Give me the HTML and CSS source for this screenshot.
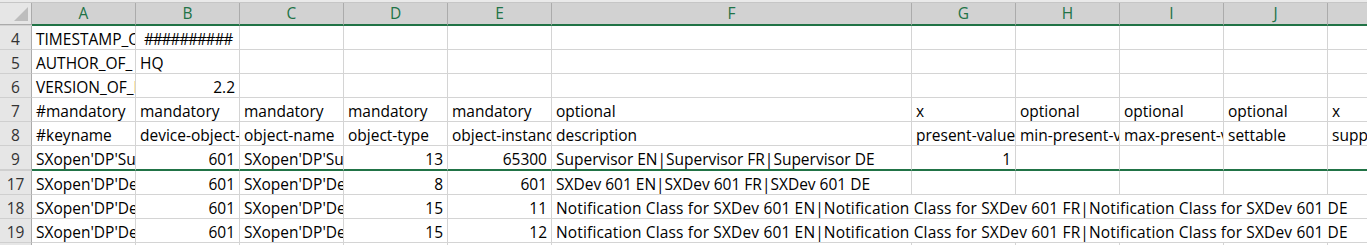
FILE: index.html
```html
<!DOCTYPE html>
<html lang="en">
<head>
    <meta charset="UTF-8">
    <title>Sheet</title>
    <link rel="stylesheet" href="styles.css">
</head>
<body>
    <div class="sheet">
        <div class="row head-row">
            <div class="corner">
                <svg width="14" height="14" viewBox="0 0 14 14"><polygon points="14,0 14,14 0,14" fill="#bdbdbd"/></svg>
            </div>
            <div class="ch">A</div>
            <div class="ch">B</div>
            <div class="ch">C</div>
            <div class="ch">D</div>
            <div class="ch">E</div>
            <div class="ch">F</div>
            <div class="ch">G</div>
            <div class="ch">H</div>
            <div class="ch">I</div>
            <div class="ch">J</div>
            <div class="ch">K</div>
        </div>

        <div class="row">
            <div class="rh">4</div>
            <div class="c">TIMESTAMP_OF_EXPORT</div>
            <div class="c hash">##########</div>
            <div class="c"></div><div class="c"></div><div class="c"></div><div class="c"></div>
            <div class="c"></div><div class="c"></div><div class="c"></div><div class="c"></div><div class="c"></div>
        </div>
        <div class="row">
            <div class="rh">5</div>
            <div class="c">AUTHOR_OF_ EXPORT</div>
            <div class="c">HQ</div>
            <div class="c"></div><div class="c"></div><div class="c"></div><div class="c"></div>
            <div class="c"></div><div class="c"></div><div class="c"></div><div class="c"></div><div class="c"></div>
        </div>
        <div class="row">
            <div class="rh">6</div>
            <div class="c">VERSION_OF_EXPORT</div>
            <div class="c num">2.2</div>
            <div class="c"></div><div class="c"></div><div class="c"></div><div class="c"></div>
            <div class="c"></div><div class="c"></div><div class="c"></div><div class="c"></div><div class="c"></div>
        </div>
        <div class="row">
            <div class="rh">7</div>
            <div class="c">#mandatory</div>
            <div class="c">mandatory</div>
            <div class="c">mandatory</div>
            <div class="c">mandatory</div>
            <div class="c">mandatory</div>
            <div class="c">optional</div>
            <div class="c">x</div>
            <div class="c">optional</div>
            <div class="c">optional</div>
            <div class="c">optional</div>
            <div class="c">x</div>
        </div>
        <div class="row">
            <div class="rh">8</div>
            <div class="c">#keyname</div>
            <div class="c">device-object-instance</div>
            <div class="c">object-name</div>
            <div class="c">object-type</div>
            <div class="c">object-instance</div>
            <div class="c">description</div>
            <div class="c">present-value</div>
            <div class="c">min-present-value</div>
            <div class="c">max-present-value</div>
            <div class="c">settable</div>
            <div class="c">supported-values</div>
        </div>
        <div class="row frozen">
            <div class="rh">9</div>
            <div class="c">SXopen'DP'Supervisor</div>
            <div class="c num">601</div>
            <div class="c">SXopen'DP'Supervisor</div>
            <div class="c num">13</div>
            <div class="c num">65300</div>
            <div class="c">Supervisor EN|Supervisor FR|Supervisor DE</div>
            <div class="c num">1</div>
            <div class="c"></div><div class="c"></div><div class="c"></div><div class="c"></div>
        </div>
        <div class="row">
            <div class="rh">17</div>
            <div class="c">SXopen'DP'Dev601</div>
            <div class="c num">601</div>
            <div class="c">SXopen'DP'Dev601</div>
            <div class="c num">8</div>
            <div class="c num">601</div>
            <div class="c">SXDev 601 EN|SXDev 601 FR|SXDev 601 DE</div>
            <div class="c"></div><div class="c"></div><div class="c"></div><div class="c"></div><div class="c"></div>
        </div>
        <div class="row">
            <div class="rh">18</div>
            <div class="c">SXopen'DP'Dev601'NC11</div>
            <div class="c num">601</div>
            <div class="c">SXopen'DP'Dev601'NC11</div>
            <div class="c num">15</div>
            <div class="c num">11</div>
            <div class="c spill">Notification Class for SXDev 601 EN|Notification Class for SXDev 601 FR|Notification Class for SXDev 601 DE</div>
        </div>
        <div class="row">
            <div class="rh">19</div>
            <div class="c">SXopen'DP'Dev601'NC12</div>
            <div class="c num">601</div>
            <div class="c">SXopen'DP'Dev601'NC12</div>
            <div class="c num">15</div>
            <div class="c num">12</div>
            <div class="c spill">Notification Class for SXDev 601 EN|Notification Class for SXDev 601 FR|Notification Class for SXDev 601 DE</div>
        </div>
        <div class="row">
            <div class="rh"></div>
            <div class="c"></div><div class="c"></div><div class="c"></div><div class="c"></div><div class="c"></div><div class="c"></div>
            <div class="c"></div><div class="c"></div><div class="c"></div><div class="c"></div><div class="c"></div>
        </div>
    </div>
</body>
</html>
```

FILE: styles.css
```css
body {
    margin: 0;
    padding: 0;
    background-color: #fff;
    overflow: hidden;
    font-family: "Open Sans", "Noto Sans", sans-serif;
    font-size: 15.5px;
}

.sheet {
    width: 1432px;
    padding-top: 2px;
    background-color: #eaeaea;
}

.row {
    display: grid;
    grid-template-columns: 32px repeat(5, 104px) 360px repeat(5, 104px);
    background-color: #fff;
}

/* column header strip */
.head-row {
    border-top: 1px solid #c6c6c6;
    background-color: #d2d2d2;
}

.corner {
    height: 22px;
    background-color: #e6e6e6;
    border-right: 1px solid #ababab;
    border-bottom: 1px solid #ababab;
    display: flex;
    align-items: flex-end;
    justify-content: flex-end;
    padding: 0 3px 3px 0;
    box-sizing: border-box;
}

.corner svg {
    display: block;
}

.ch {
    height: 23px;
    box-sizing: border-box;
    border-right: 1px solid #ababab;
    border-bottom: 2px solid #217346;
    text-align: center;
    color: #217346;
    line-height: 20px;
}

/* row numbers */
.rh {
    height: 24px;
    box-sizing: border-box;
    background-color: #e6e6e6;
    border-right: 1px solid #ababab;
    border-bottom: 1px solid #cfcfcf;
    color: #333;
    text-align: center;
    line-height: 20px;
    padding-top: 3px;
}

/* cells */
.c {
    height: 24px;
    box-sizing: border-box;
    border-right: 1px solid #d4d4d4;
    border-bottom: 1px solid #d4d4d4;
    padding: 3px 3px 0 4px;
    line-height: 20px;
    white-space: nowrap;
    overflow: hidden;
    color: #000;
}

.num {
    text-align: right;
    padding-right: 4px;
}

.hash {
    text-align: center;
    letter-spacing: -1.2px;
}

/* long text runs over the empty cells to its right */
.spill {
    grid-column: 7 / span 6;
    letter-spacing: 0.15px;
}

.frozen .c {
    height: 25px;
    border-bottom: 2px solid #217346;
}

.frozen .rh {
    height: 25px;
    border-bottom: 2px solid #cfcfcf;
}
```
